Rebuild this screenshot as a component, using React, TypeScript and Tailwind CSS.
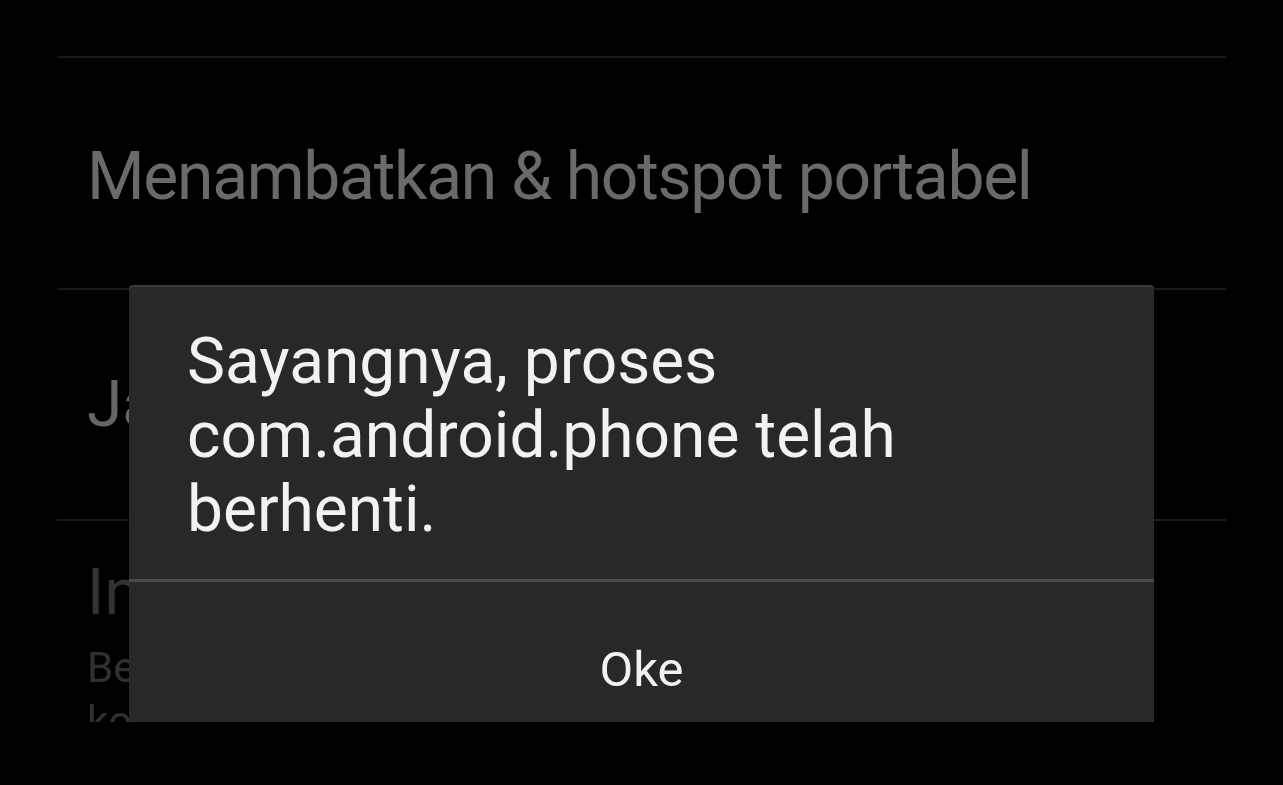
import React from 'react'

const FONT = { fontFamily: 'Roboto, "Noto Sans", sans-serif' }

function Row({ children, className = '' }: { children: React.ReactNode; className?: string }) {
  return <div className={'border-t-2 border-[#1a1a1a] ' + className}>{children}</div>
}

export default function App() {
  return (
    <div className="relative w-[1283px] h-[785px] bg-black overflow-hidden" style={FONT}>
      {/* screen area, letterboxed at the bottom */}
      <div className="h-[722px] overflow-hidden">
        <div className="flex flex-col px-[57px] pt-[56px]">
          <Row className="h-[232px] flex items-center pl-[30px]">
            <span className="text-[66px] leading-none text-[#6a6a6a] tracking-[-1.3px] pt-[8px]">
              Menambatkan &amp; hotspot portabel
            </span>
          </Row>
          <Row className="h-[231px] flex items-center pl-[30px]">
            <span className="text-[64px] leading-none text-[#666]">Jaringan seluler</span>
          </Row>
          <Row className="pl-[30px] pt-[40px]">
            <div className="text-[64px] leading-none text-[#333]">Internet</div>
            <div className="text-[42px] leading-[54px] text-[#303030] mt-[16px] w-[260px]">
              Berbagi koneksi data seluler
            </div>
          </Row>
        </div>
      </div>

      {/* crash dialog */}
      <div className="absolute left-[129px] top-[285px] w-[1025px] h-[437px] bg-[#282828] rounded-t-[4px] border-t-2 border-[#3a3a3a] flex flex-col">
        <div className="h-[292px] pl-[58px] pr-[40px] pt-[38px]">
          <p className="text-[64px] leading-[74px] text-[#f2f2f2]">
            Sayangnya, proses
            <br />
            com.android.phone telah
            <br />
            berhenti.
          </p>
        </div>
        <div className="h-[3px] bg-[#4a4a4a]" />
        <div className="flex-1 flex items-center justify-center pt-[34px]">
          <span className="text-[49px] leading-none text-[#f2f2f2]">Oke</span>
        </div>
      </div>
    </div>
  )
}
